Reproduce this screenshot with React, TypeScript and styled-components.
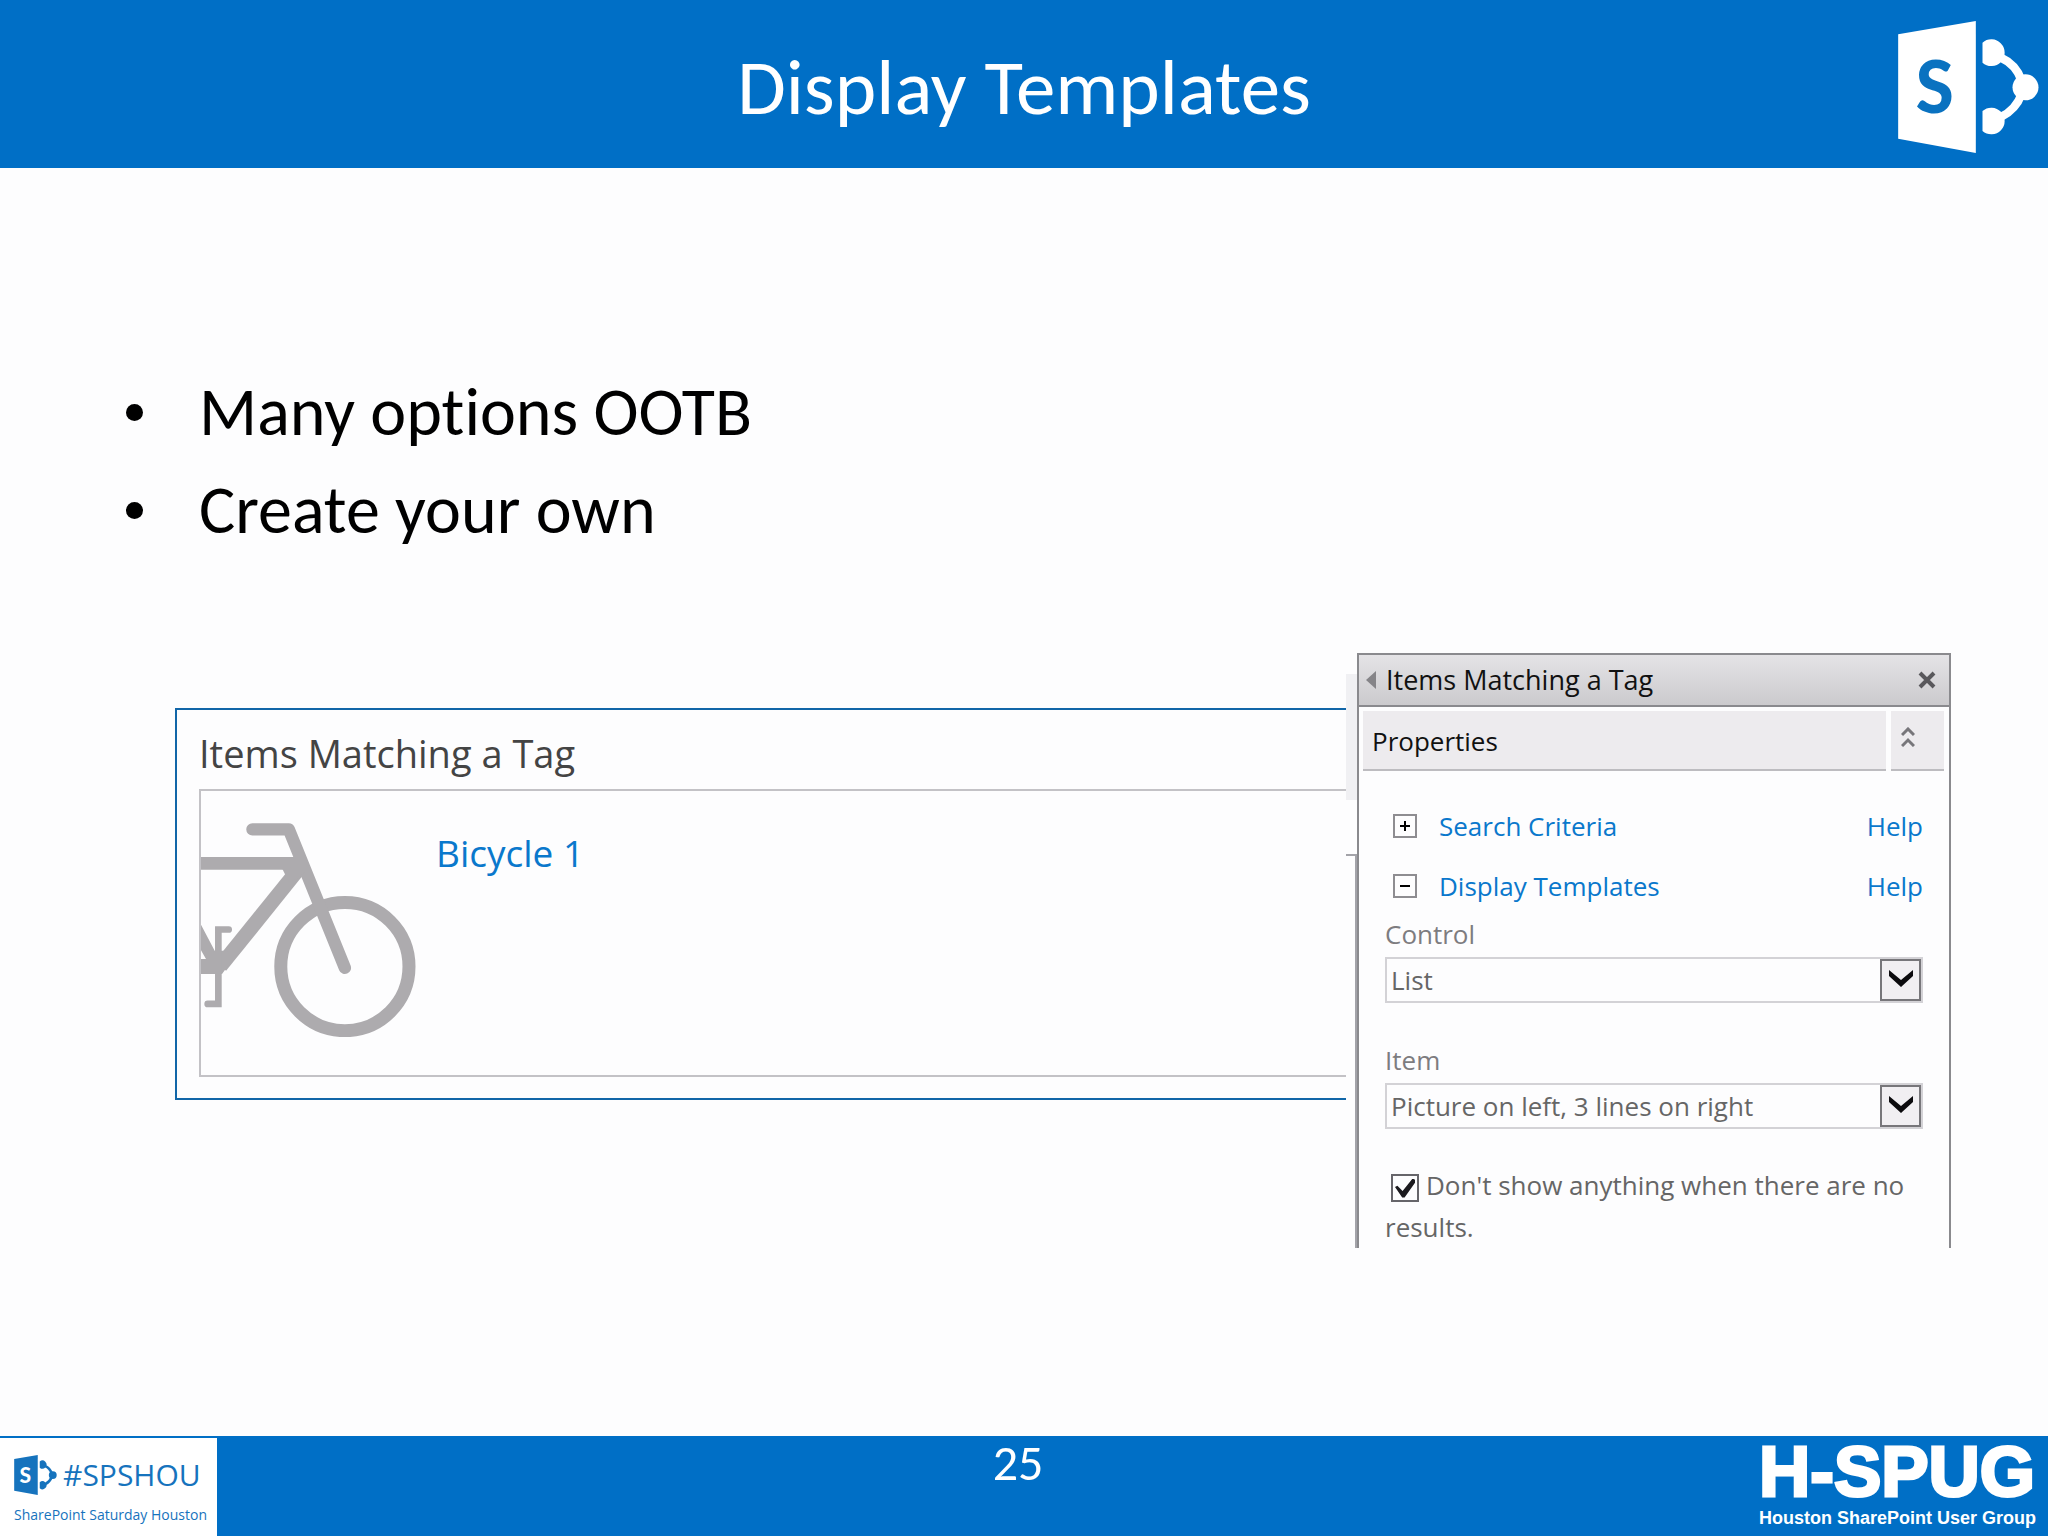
import React from "react";
import styled, { createGlobalStyle } from "styled-components";

const blue = "#006fc6";
const link = "#0a78cc";
const ui = `"Segoe UI", "Open Sans", "Noto Sans", sans-serif`;

const GlobalStyle = createGlobalStyle`
  *, *::before, *::after { box-sizing: border-box; }
  body {
    margin: 0;
    background: #fdfdfe;
    font-family: Carlito, Lato, sans-serif;
    font-variant-ligatures: none;
    color: #000;
  }
  h1, h2, h3, p, ul { margin: 0; padding: 0; font-weight: 400; }
  button { border: 0; padding: 0; background: none; font: inherit; color: inherit; cursor: pointer; }
  a { text-decoration: none; }
  svg { display: block; }
`;

const Slide = styled.div`
  min-height: 100vh;
  display: flex;
  flex-direction: column;
`;

const Header = styled.header`
  display: grid;
  grid-template-columns: 1fr auto 1fr;
  align-items: center;
  height: 168px;
  padding: 6px 9px 0;
  background: ${blue};
  color: #fff;
`;

const Title = styled.h1`
  grid-column: 2;
  font-size: 79px;
  line-height: 88px;
`;

const HeaderLogo = styled.div`
  justify-self: end;
`;

const Main = styled.main`
  flex: 1;
  padding: 195px 97px 0 121px;
`;

const Bullets = styled.ul`
  list-style: none;
  font-size: 68px;
  line-height: 98px;
`;

const Bullet = styled.li`
  display: flex;
  align-items: center;
  gap: 56px;
  padding-left: 5px;
  &::before {
    content: "";
    width: 17px;
    height: 17px;
    border-radius: 50%;
    background: #000;
  }
`;

const Demo = styled.div`
  display: flex;
  align-items: flex-start;
  padding: 94px 0 0 54px;
`;

const WebPart = styled.section`
  flex: 1;
  margin-top: 55px;
  padding: 19px 0 21px 22px;
  border: 2px solid #1166a8;
  border-right: 0;
  font-family: ${ui};
`;

const WebPartTitle = styled.h2`
  font-size: 38px;
  line-height: 48px;
  padding-bottom: 12px;
  color: #444;
`;

const Result = styled.article`
  display: flex;
  gap: 20px;
  height: 288px;
  padding-top: 32px;
  border: 2px solid #c3c2c6;
  border-right: 0;
`;

const ResultLink = styled.a`
  font-size: 37px;
  line-height: 60px;
  color: ${link};
`;

const Gutter = styled.div`
  align-self: stretch;
  width: 11px;
  display: flex;
  flex-direction: column;
  gap: 54px;
  padding-top: 21px;
`;

const GutterTab = styled.div`
  height: 126px;
  background: #f0f0f3;
`;

const GutterEdge = styled.div`
  flex: 1;
  border: solid #a3a3a9;
  border-width: 2px 2px 0 0;
`;

const Panel = styled.aside`
  width: 594px;
  border: 2px solid #8a8a8e;
  border-bottom: 0;
  font-family: ${ui};
  font-size: 26px;
  line-height: 42px;
  color: #666;
`;

const PanelHeader = styled.div`
  display: flex;
  align-items: center;
  gap: 10px;
  height: 52px;
  padding: 0 13px 0 7px;
  border-bottom: 2px solid #8a8a8e;
  background: linear-gradient(#e4e3e6, #cbcacd);
  color: #111;
`;

const PanelTitle = styled.h2`
  flex: 1;
  font-size: 27px;
  line-height: 42px;
`;

const PropertyBar = styled.div`
  display: flex;
  gap: 5px;
  padding: 4px 5px 4px 4px;
`;

const PropertyTitle = styled.h3`
  flex: 1;
  padding: 9px 9px 7px;
  border-bottom: 2px solid #bdbcc0;
  background: #edebee;
  font-size: 26px;
  line-height: 42px;
  color: #111;
`;

const CollapseAll = styled.button`
  width: 53px;
  padding: 0 0 6px 10px;
  border-bottom: 2px solid #bdbcc0;
  background: #edebee;
`;

const PanelBody = styled.div`
  padding: 21px 26px 0;
`;

const Group = styled.div`
  display: flex;
  align-items: center;
  height: 60px;
  padding-left: 8px;
  a { color: ${link}; }
`;

const Toggle = styled.button`
  display: grid;
  place-items: center;
  width: 24px;
  height: 24px;
  margin-right: 22px;
  border: 2px solid #8e8d91;
`;

const GroupLink = styled.a`
  flex: 1;
`;

const Field = styled.div`
  display: flex;
  flex-direction: column;
  margin-bottom: 39px;
  label { line-height: 36px; padding-bottom: 5px; color: #7d7c80; }
`;

const SelectBox = styled.div`
  display: grid;
  grid-template-columns: 1fr 41px;
  align-items: center;
  height: 46px;
  border: 2px solid #d3d2d6;
`;

const Select = styled.select`
  grid-area: 1 / 1 / 2 / 3;
  appearance: none;
  height: 42px;
  border: 0;
  padding: 0 45px 0 4px;
  background: none;
  font: inherit;
  color: #666;
`;

const Arrow = styled.span`
  grid-area: 1 / 2;
  display: grid;
  justify-items: center;
  height: 42px;
  padding-top: 9px;
  border: 2px solid #77767a;
  background: #f1eff2;
  pointer-events: none;
`;

const CheckLabel = styled.label`
  display: block;
  margin: -4px -10px 0 0;
`;

const Check = styled.input`
  appearance: none;
  display: inline-grid;
  place-items: center;
  width: 28px;
  height: 28px;
  margin: 0 7px 0 6px;
  vertical-align: middle;
  border: 2px solid #66656a;
  &:checked::before {
    content: "";
    width: 20px;
    height: 19px;
    background: #1b1a1e;
    clip-path: polygon(0 45%, 12% 38%, 38% 65%, 88% 0, 100% 6%, 100% 22%, 48% 100%, 36% 100%);
  }
`;

const Footer = styled.footer`
  display: grid;
  grid-template-columns: 1fr auto 1fr;
  height: 100px;
  padding-right: 12px;
  background: ${blue};
  color: #fff;
`;

const EventBadge = styled.div`
  width: 217px;
  margin-top: 2px;
  padding: 14px 0 0 14px;
  background: #fff;
  color: #1673bd;
  font-family: ${ui};
`;

const EventName = styled.div`
  display: flex;
  align-items: center;
  gap: 6px;
  height: 46px;
  font-size: 30px;
  line-height: 46px;
  font-weight: 500;
`;

const EventCaption = styled.p`
  font-size: 14px;
  line-height: 34px;
  white-space: nowrap;
`;

const PageNumber = styled.p`
  font-size: 50px;
  line-height: 54px;
`;

const GroupBrand = styled.div`
  justify-self: end;
  font-family: "Liberation Sans", Arial, sans-serif;
`;

const BrandName = styled.p`
  font-size: 71px;
  line-height: 72px;
  font-weight: 700;
  -webkit-text-stroke: 3px #fff;
`;

const BrandCaption = styled.p`
  font-size: 18px;
  line-height: 20px;
  font-weight: 700;
`;

function SharePointMark({ width, color, letter }: { width: number; color: string; letter: string }) {
  return (
    <svg width={width} height={Math.round((width * 396) / 422)} viewBox="112 62 422 396" aria-hidden="true">
      <path d="M112 102 345 62V458L112 415Z" fill={color} />
      <text x="222" y="338" textAnchor="middle" fontFamily="Carlito, Lato, sans-serif" fontWeight="700" fontSize="244" fill={letter}>
        S
      </text>
      <path d="M365 127A40 40 0 1 1 365 187Z" fill={color} />
      <path d="M365 332A40 40 0 1 1 365 392Z" fill={color} />
      <circle cx="494" cy="261" r="39" fill={color} />
      <path d="M420 172Q465 192 482 240M482 282Q465 328 420 350" fill="none" stroke={color} strokeWidth="25" />
    </svg>
  );
}

function Bicycle() {
  return (
    <svg width="215" height="214" viewBox="122 399 644 641" role="img" aria-label="Bicycle" fill="none" stroke="#adabae">
      <circle cx="553" cy="829" r="192" strokeWidth="39" />
      <path d="M276 418H385L553 833" strokeWidth="37" strokeLinecap="round" strokeLinejoin="round" />
      <path d="M118 520H415" strokeWidth="38" />
      <path d="M180 828 408 545" strokeWidth="44" />
      <path d="M365 535H440L415 565 385 575Z" fill="#adabae" stroke="none" />
      <path d="M122 704 163 782H200L215 810 185 851H122V806H137L122 780Z" fill="#adabae" stroke="none" />
      <path d="M205 718H174V941H142" strokeWidth="20" strokeLinecap="round" />
    </svg>
  );
}

function Dropdown({ id, label, value }: { id: string; label: string; value: string }) {
  return (
    <Field>
      <label htmlFor={id}>{label}</label>
      <SelectBox>
        <Select id={id} defaultValue={value}>
          <option>{value}</option>
        </Select>
        <Arrow>
          <svg width="24" height="17" viewBox="0 0 24 17">
            <path d="M0 0 12 10 24 0V6L12 17 0 6Z" fill="#0c0b0e" />
          </svg>
        </Arrow>
      </SelectBox>
    </Field>
  );
}

function PropertyGroup({ name, open }: { name: string; open?: boolean }) {
  return (
    <Group>
      <Toggle aria-label={`Toggle ${name}`} aria-expanded={!!open}>
        <svg width="12" height="12" viewBox="0 0 12 12" stroke="#000" strokeWidth="2">
          <path d={open ? "M1 6H11" : "M1 6H11M6 1V11"} />
        </svg>
      </Toggle>
      <GroupLink href="#">{name}</GroupLink>
      <a href="#">Help</a>
    </Group>
  );
}

export default function App() {
  return (
    <Slide>
      <GlobalStyle />
      <Header>
        <Title>Display Templates</Title>
        <HeaderLogo>
          <SharePointMark width={141} color="#fff" letter="#0a72c0" />
        </HeaderLogo>
      </Header>

      <Main>
        <Bullets>
          <Bullet>Many options OOTB</Bullet>
          <Bullet>Create your own</Bullet>
        </Bullets>

        <Demo>
          <WebPart>
            <WebPartTitle>Items Matching a Tag</WebPartTitle>
            <Result>
              <Bicycle />
              <ResultLink href="#">Bicycle 1</ResultLink>
            </Result>
          </WebPart>
          <Gutter>
            <GutterTab />
            <GutterEdge />
          </Gutter>
          <Panel>
            <PanelHeader>
              <svg width="10" height="18" viewBox="0 0 10 18">
                <path d="M10 0V18L0 9Z" fill="#858488" />
              </svg>
              <PanelTitle>Items Matching a Tag</PanelTitle>
              <button aria-label="Close">
                <svg width="18" height="18" viewBox="0 0 18 18">
                  <path d="M2 2 16 16M16 2 2 16" stroke="#59585c" strokeWidth="4" />
                </svg>
              </button>
            </PanelHeader>
            <PropertyBar>
              <PropertyTitle>Properties</PropertyTitle>
              <CollapseAll aria-label="Collapse properties">
                <svg width="14" height="20" viewBox="0 0 14 20" fill="none" stroke="#77767a" strokeWidth="3">
                  <path d="M1 8 7 2 13 8M1 19 7 13 13 19" />
                </svg>
              </CollapseAll>
            </PropertyBar>
            <PanelBody>
              <PropertyGroup name="Search Criteria" />
              <PropertyGroup name="Display Templates" open />
              <Dropdown id="control-template" label="Control" value="List" />
              <Dropdown id="item-template" label="Item" value="Picture on left, 3 lines on right" />
              <CheckLabel>
                <Check type="checkbox" defaultChecked />
                Don't show anything when there are no results.
              </CheckLabel>
            </PanelBody>
          </Panel>
        </Demo>
      </Main>

      <Footer>
        <EventBadge>
          <EventName>
            <SharePointMark width={43} color="#1673bd" letter="#fff" />
            #SPSHOU
          </EventName>
          <EventCaption>SharePoint Saturday Houston</EventCaption>
        </EventBadge>
        <PageNumber>25</PageNumber>
        <GroupBrand>
          <BrandName>H-SPUG</BrandName>
          <BrandCaption>Houston SharePoint User Group</BrandCaption>
        </GroupBrand>
      </Footer>
    </Slide>
  );
}
